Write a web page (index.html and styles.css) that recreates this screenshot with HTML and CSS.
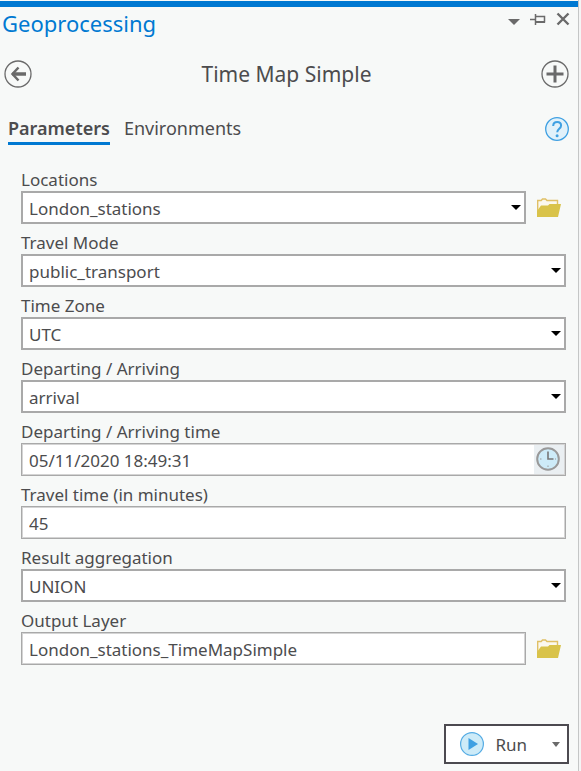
FILE: index.html
```html
<!DOCTYPE html>
<html lang="en">
<head>
  <meta charset="utf-8">
  <title>Geoprocessing</title>
  <link rel="stylesheet" href="styles.css">
</head>
<body>
  <div class="pane">
    <header class="pane-header">
      <h1 class="pane-title">Geoprocessing</h1>
      <div class="pane-controls">
        <button class="icon-button" aria-label="Menu">
          <svg width="12" height="16" viewBox="0 0 12 16"><path d="M0 8h12l-6 6z" fill="#6a6a6a"/></svg>
        </button>
        <button class="icon-button" aria-label="Auto hide">
          <svg width="16" height="16" viewBox="0 0 16 16" fill="none" stroke="#6a6a6a"><path d="M0 8.500h5" stroke-width="1.500"/><path d="M5.500 3v11" stroke-width="1.500"/><path d="M6 5.500h8.500v6" stroke-width="1.500"/><path d="M6 11h9" stroke-width="2"/></svg>
        </button>
        <button class="icon-button" aria-label="Close">
          <svg width="14" height="16" viewBox="0 0 14 16" fill="none" stroke="#6a6a6a" stroke-width="2.400"><path d="M1.500 2.500l11 11M12.500 2.500l-11 11"/></svg>
        </button>
      </div>
    </header>

    <div class="tool-header">
      <button class="icon-button" aria-label="Back">
        <svg width="28" height="28" viewBox="0 0 28 28" fill="none" stroke="#6a6a6a"><circle cx="14" cy="14" r="13" stroke-width="1.300"/><path d="M8.500 14H22" stroke-width="3.500"/><path d="M14.500 7.500L8.500 14l6 6.500" stroke-width="2.500"/></svg>
      </button>
      <h2 class="tool-title">Time Map Simple</h2>
      <button class="icon-button" aria-label="Add">
        <svg width="28" height="28" viewBox="0 0 28 28" fill="none" stroke="#6a6a6a"><circle cx="14" cy="14" r="13" stroke-width="1.300"/><path d="M5.500 14h17M14 5.500v17" stroke-width="3"/></svg>
      </button>
    </div>

    <nav class="tabs">
      <a href="#parameters" class="tab active">Parameters</a>
      <a href="#environments" class="tab">Environments</a>
      <button class="icon-button help" aria-label="Help">
        <svg width="24" height="24" viewBox="0 0 24 24" fill="none"><circle cx="12" cy="12" r="11.300" fill="#e1f1fa" stroke="#3fa0e2" stroke-width="1.300"/><path d="M8.200 9c0-2.500 1.600-4 4-4s3.900 1.400 3.900 3.500c0 3.200-3.900 3.300-3.900 6.800" stroke="#3fa0e2" stroke-width="2"/><circle cx="12.100" cy="18.800" r="1.500" fill="#3fa0e2"/></svg>
      </button>
    </nav>

    <form class="parameters" id="parameters">
      <div class="field">
        <label class="label" for="locations">Locations</label>
        <div class="field-row">
          <div class="select">
            <select id="locations" class="input"><option>London_stations</option></select>
          </div>
          <button type="button" class="icon-button browse" aria-label="Browse locations">
            <svg width="24" height="20" viewBox="0 0 24 20"><path d="M.7 18V2.500h3.500L5.500 1h3l1.500 1.500h10.500V7" fill="#fbf8ee" stroke="#e0c066" stroke-width="1.400"/><path d="M0 19V13l4-5.500h7L12.500 6H24l-3 13z" fill="#d9c34a"/></svg>
          </button>
        </div>
      </div>

      <div class="field">
        <label class="label" for="travelMode">Travel Mode</label>
        <div class="select">
          <select id="travelMode" class="input"><option>public_transport</option></select>
        </div>
      </div>

      <div class="field">
        <label class="label" for="timeZone">Time Zone</label>
        <div class="select">
          <select id="timeZone" class="input"><option>UTC</option></select>
        </div>
      </div>

      <div class="field">
        <label class="label" for="direction">Departing / Arriving</label>
        <div class="select">
          <select id="direction" class="input"><option>arrival</option></select>
        </div>
      </div>

      <div class="field">
        <label class="label" for="dateTime">Departing / Arriving time</label>
        <div class="input-group">
          <input type="text" id="dateTime" class="input-plain" value="05/11/2020 18:49:31">
          <button type="button" class="icon-button clock" aria-label="Pick time">
            <svg width="24" height="24" viewBox="0 0 24 24" fill="none"><circle cx="12" cy="12" r="10.800" fill="#cdebf8" stroke="#999" stroke-width="2"/><path d="M12 4.500v7.500h5.500" stroke="#777" stroke-width="1.600"/><path d="M4 12h1.500M19 12h1M12 18.500V20" stroke="#999"/></svg>
          </button>
        </div>
      </div>

      <div class="field">
        <label class="label" for="travelTime">Travel time (in minutes)</label>
        <input type="text" id="travelTime" class="input input-text" value="45">
      </div>

      <div class="field">
        <label class="label" for="aggregation">Result aggregation</label>
        <div class="select">
          <select id="aggregation" class="input"><option>UNION</option></select>
        </div>
      </div>

      <div class="field">
        <label class="label" for="outputLayer">Output Layer</label>
        <div class="field-row">
          <input type="text" id="outputLayer" class="input input-text" value="London_stations_TimeMapSimple">
          <button type="button" class="icon-button browse" aria-label="Browse output layer">
            <svg width="24" height="20" viewBox="0 0 24 20"><path d="M.7 18V2.500h3.500L5.500 1h3l1.500 1.500h10.500V7" fill="#fbf8ee" stroke="#e0c066" stroke-width="1.400"/><path d="M0 19V13l4-5.500h7L12.500 6H24l-3 13z" fill="#d9c34a"/></svg>
          </button>
        </div>
      </div>
    </form>

    <footer class="pane-footer">
      <div class="run">
        <button class="run-button">
          <svg width="24" height="24" viewBox="0 0 24 24"><circle cx="12" cy="12" r="11.400" fill="#cdebf8" stroke="#55ace4" stroke-width="1.200"/><path d="M8.500 6l9.500 6-9.500 6z" fill="#3fa0e2"/></svg>
          Run
        </button>
        <button class="icon-button run-menu" aria-label="Run options">
          <svg width="8" height="5" viewBox="0 0 8 5"><path d="M0 0h8L4 5z" fill="#6a6a6a"/></svg>
        </button>
      </div>
    </footer>
  </div>
</body>
</html>
```
FILE: styles.css
```css
:root {
  --background: #f7f9f8;
  --foreground: #4c4c4e;
  --accent: #0079d2;
  --border: #a9a9a9;
}

* {
  box-sizing: border-box;
}

body {
  margin: 0;
  padding-right: 2px;
  background: #f4f5f5;
  color: var(--foreground);
  font-family: "Noto Sans", "Open Sans", sans-serif;
  font-size: 17px;
}

h1,
h2 {
  margin: 0;
  font-weight: 400;
}

button,
input,
select {
  font: inherit;
  color: inherit;
}

svg {
  display: block;
}

.pane {
  display: flex;
  flex-direction: column;
  min-height: 100vh;
  padding-top: 1px;
  border-right: 1px solid #c4c6c6;
  background: var(--background);
}

.pane-header {
  display: flex;
  justify-content: space-between;
  border-top: 6px solid var(--accent);
  padding: 0 8px 0 2px;
}

.pane-title {
  font-size: 22px;
  line-height: 32px;
  color: var(--accent);
}

.pane-controls {
  display: flex;
  gap: 10px;
  padding-top: 4px;
  height: 20px;
}

.icon-button {
  display: flex;
  align-items: center;
  justify-content: center;
  flex-shrink: 0;
  padding: 0;
  border: none;
  background: none;
  cursor: pointer;
}

.tool-header {
  display: flex;
  align-items: center;
  justify-content: space-between;
  margin-top: 19px;
  padding: 0 9px 0 4px;
}

.tool-title {
  font-size: 21px;
  line-height: 32px;
}

.tabs {
  display: flex;
  align-items: flex-start;
  gap: 14px;
  margin-top: 26px;
  padding: 0 9px 0 8px;
}

.tab {
  padding-bottom: 2px;
  border-bottom: 3px solid transparent;
  font-size: 18px;
  line-height: 24px;
  color: inherit;
  text-decoration: none;
}

.tab.active {
  border-color: var(--accent);
  font-weight: 600;
}

.help {
  margin-left: auto;
  padding-top: 1px;
}

.parameters {
  display: flex;
  flex-direction: column;
  gap: 6px;
  padding: 22px 12px 0 21px;
}

.label {
  display: block;
  padding-top: 2px;
  line-height: 22px;
}

.field-row {
  display: flex;
  align-items: center;
  gap: 11px;
}

.select {
  position: relative;
  flex: 1;
}

.select::after {
  position: absolute;
  content: "";
  top: 14px;
  right: 5px;
  border: 5px solid transparent;
  border-top-color: #000;
  border-bottom: none;
  pointer-events: none;
}

.input {
  display: block;
  width: 100%;
  height: 33px;
  padding: 2px 6px 0;
  border: 2px solid var(--border);
  border-radius: 0;
  background: #fff;
  appearance: none;
  outline: none;
}

.input-text {
  border-width: 1px;
  padding: 2px 7px 0;
  box-shadow: inset 0 0 0 1px #d4d4d4;
}

.input-group {
  display: flex;
  height: 33px;
  border: 1px solid var(--border);
  background: #fff;
  box-shadow: inset 0 0 0 1px #d4d4d4;
}

.input-plain {
  flex: 1;
  min-width: 0;
  padding: 2px 7px 0;
  border: none;
  background: none;
  outline: none;
}

.clock {
  width: 30px;
  margin: 1px 1px 1px 0;
  padding: 0 2px 2px 0;
  background: #eaeff2;
}

.browse {
  margin-right: 5px;
}

.pane-footer {
  display: flex;
  justify-content: flex-end;
  margin-top: auto;
  padding: 20px 9px 7px;
}

.run {
  display: flex;
  height: 40px;
  border: 2px solid #4c4a50;
  background: #fff;
}

.run-button {
  display: flex;
  align-items: center;
  gap: 11px;
  padding: 0 18px 0 14px;
  border: none;
  background: none;
  cursor: pointer;
}

.run-menu {
  width: 22px;
}
```
